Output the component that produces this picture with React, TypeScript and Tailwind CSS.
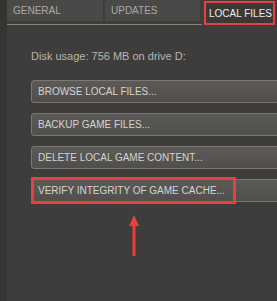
import React from 'react';

const buttons = [
  'BROWSE LOCAL FILES...',
  'BACKUP GAME FILES...',
  'DELETE LOCAL GAME CONTENT...',
];

const ActionButton: React.FC<{ label: string }> = ({ label }) => (
  <div className="h-[23px] w-[300px] flex items-center pl-[6px] rounded-[3px] border border-[#7b7874] bg-gradient-to-b from-[#5c5a56] to-[#514f4c] text-[10px] text-[#d4d4d4] whitespace-nowrap">
    {label}
  </div>
);

const App: React.FC = () => {
  return (
    <div
      className="w-[277px] h-[301px] overflow-hidden flex bg-[#3f3d3b]"
      style={{ fontFamily: '"Liberation Sans", Arial, sans-serif' }}
    >
      {/* left strip */}
      <div className="w-[7px] shrink-0 bg-[#363432]" />

      <div className="flex-1 flex flex-col">
        {/* tabs */}
        <div className="flex items-start">
          <div className="w-[195px] flex flex-col">
            <div className="flex gap-[2px] h-[21px]">
              <div className="w-[96px] bg-[#4b4947] flex items-center pl-[6px] text-[10px] text-[#a9a9a9]">
                GENERAL
              </div>
              <div className="w-[95px] bg-[#4b4947] flex items-center pl-[6px] text-[10px] text-[#a9a9a9]">
                UPDATES
              </div>
            </div>
            <div className="mt-[3px] h-px bg-[#858380]" />
          </div>
          <div className="ml-[2px] mt-px w-[71px] h-[24px] border-2 border-[#e8403f] bg-[#3b3937] flex items-center pl-[3px] text-[10px] text-[#ececec] whitespace-nowrap">
            LOCAL FILES
          </div>
        </div>

        <div className="ml-[24px] mt-[25px] text-[11px] leading-[13px] text-[#b6b6b6]">
          Disk usage: 756 MB on drive D:
        </div>

        <div className="ml-[24px] mt-[17px] flex flex-col gap-[10px]">
          {buttons.map((b) => (
            <ActionButton key={b} label={b} />
          ))}
          <div className="relative">
            <ActionButton label="VERIFY INTEGRITY OF GAME CACHE..." />
            <div className="absolute left-0 top-[-2px] w-[205px] h-[27px] border-[3px] border-[#e8403f]" />
          </div>
        </div>

        {/* arrow */}
        <svg className="ml-[121px] mt-[13px]" width="12" height="42" viewBox="0 0 12 42">
          <polygon points="6,0 11,11 1,11" fill="#e8403f" />
          <line x1="6" y1="9" x2="6" y2="41" stroke="#e8403f" strokeWidth="3" />
        </svg>
      </div>
    </div>
  );
};

export default App;
